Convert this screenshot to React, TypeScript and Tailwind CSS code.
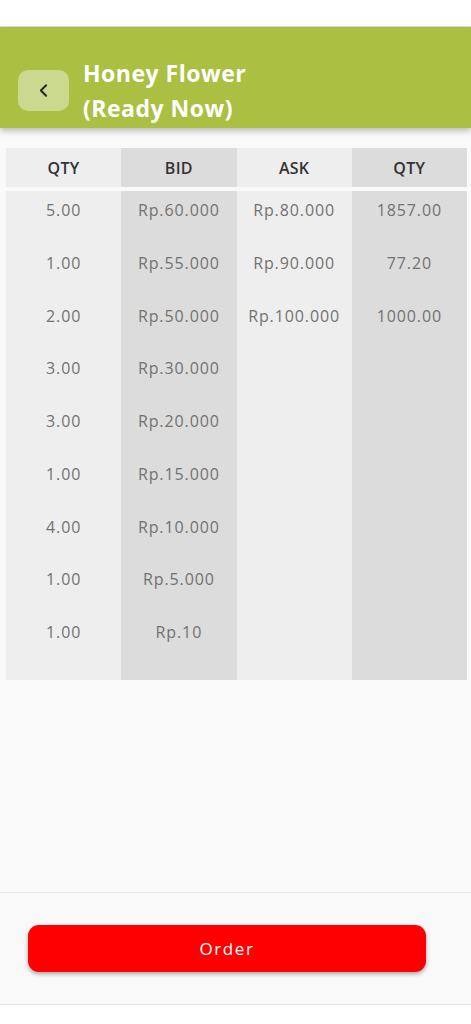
import { ChevronLeft } from "lucide-react";

interface OrderRow {
  bidQty?: string;
  bid?: string;
  ask?: string;
  askQty?: string;
}

const rows: OrderRow[] = [
  { bidQty: "5.00", bid: "Rp.60.000", ask: "Rp.80.000", askQty: "1857.00" },
  { bidQty: "1.00", bid: "Rp.55.000", ask: "Rp.90.000", askQty: "77.20" },
  { bidQty: "2.00", bid: "Rp.50.000", ask: "Rp.100.000", askQty: "1000.00" },
  { bidQty: "3.00", bid: "Rp.30.000" },
  { bidQty: "3.00", bid: "Rp.20.000" },
  { bidQty: "1.00", bid: "Rp.15.000" },
  { bidQty: "4.00", bid: "Rp.10.000" },
  { bidQty: "1.00", bid: "Rp.5.000" },
  { bidQty: "1.00", bid: "Rp.10" },
];

const columns: { title: string; key: keyof OrderRow; bg: string }[] = [
  { title: "QTY", key: "bidQty", bg: "bg-[#eeeeee]" },
  { title: "BID", key: "bid", bg: "bg-[#dcdcdc]" },
  { title: "ASK", key: "ask", bg: "bg-[#eeeeee]" },
  { title: "QTY", key: "askQty", bg: "bg-[#dcdcdc]" },
];

export default function App() {
  return (
    <div
      className="w-full h-[1024px] flex flex-col bg-white overflow-hidden"
      style={{ fontFamily: '"Open Sans", "Noto Sans", sans-serif' }}
    >
      <div className="h-[27px] bg-white border-b border-[#dedede]" />

      {/* Header */}
      <div className="relative z-10 h-[101px] bg-[#abbf43] shadow-[0_3px_6px_rgba(0,0,0,0.25)] flex items-center gap-[14px] px-[18px] pt-[26px]">
        <button
          type="button"
          className="w-[51px] h-[41px] rounded-[10px] bg-[#cbd98e] flex items-center justify-center text-[#222]"
        >
          <ChevronLeft size={21} strokeWidth={2.2} />
        </button>
        <h1 className="text-white font-bold text-[23px] leading-[35px] tracking-[0.5px]">
          Honey Flower
          <br />
          (Ready Now)
        </h1>
      </div>

      {/* Order book */}
      <div className="flex-1 bg-[#f9f9f9] pt-[20px] pl-[6px] pr-[4px]">
        <div className="grid grid-cols-4">
          {columns.map((c, i) => (
            <div
              key={i}
              className={`${c.bg} h-[39px] flex items-center justify-center text-[16px] font-semibold tracking-[0.3px] text-[#333]`}
            >
              {c.title}
            </div>
          ))}
        </div>
        <div className="grid grid-cols-4 mt-[4px]">
          {columns.map((c, i) => (
            <div key={i} className={`${c.bg} flex flex-col pb-[14px]`}>
              {rows.map((r, j) => (
                <div
                  key={j}
                  className="h-[52.75px] pt-[8px] text-center text-[16px] leading-[22px] tracking-[0.9px] text-[#727272]"
                >
                  {r[c.key] ?? ""}
                </div>
              ))}
            </div>
          ))}
        </div>
      </div>

      {/* Bottom bar */}
      <div className="h-[113px] bg-[#f9f9f9] border-t border-[#e6e6e6] border-b px-[28px] pt-[32px] shrink-0">
        <button
          type="button"
          className="w-[398px] h-[47px] rounded-[11px] bg-[#ff0000] text-white text-[17px] font-medium tracking-[1.6px] shadow-[0_2px_4px_rgba(0,0,0,0.35)]"
        >
          Order
        </button>
      </div>
      <div className="h-[19px] bg-white shrink-0" />
    </div>
  );
}
